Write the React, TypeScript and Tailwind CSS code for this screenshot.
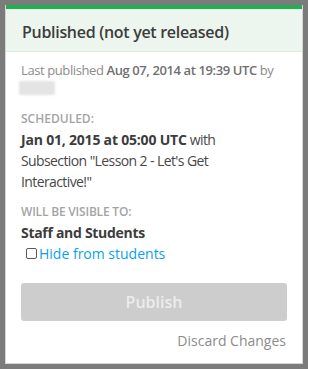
import React from "react";

export default function App() {
  return (
    <div className="w-[308px] h-[369px] bg-[#7b7b7b] p-[5px] pb-[5px]" style={{ fontFamily: '"Open Sans", sans-serif' }}>
      <div className="h-full bg-white border border-[#d6d6d6] border-t-0 flex flex-col">
        <div className="h-[4px] bg-[#1fb04f]" />
        <div className="h-[43px] bg-[#ecf6ee] border-b border-[#e2ece4] flex items-center px-[16px] pt-[3px]">
          <span className="text-[16px] font-semibold text-[#3c3c3c] tracking-[-0.3px]">Published (not yet released)</span>
        </div>
        <div className="px-[15px] pt-[9px] flex flex-col">
          <div className="text-[13px] leading-[19px] text-[#8c8c8c] tracking-[-0.4px]">
            Last published <span className="font-semibold text-[#707070]">Aug 07, 2014 at 19:39 UTC</span> by
          </div>
          <div className="w-[36px] h-[14px] bg-[#e4e4e4] rounded-[2px] blur-[1px] mt-[1px] -ml-[2px]" />
          <div className="mt-[15px] text-[12px] font-semibold uppercase text-[#a4a4a4] leading-[18px]">Scheduled:</div>
          <div className="text-[14px] leading-[21px] text-[#484848] mt-[1px] tracking-[-0.6px]">
            <span className="font-bold tracking-[-0.2px] text-[#3c3c3c]">Jan 01, 2015 at 05:00 UTC</span> with
            <br />
            Subsection "Lesson 2 - Let's Get
            <br />
            Interactive!"
          </div>
          <div className="mt-[11px] text-[12px] font-semibold uppercase text-[#a4a4a4] leading-[18px] tracking-[-0.2px]">Will be visible to:</div>
          <div className="text-[14px] leading-[21px] font-bold text-[#3c3c3c] mt-[1px] tracking-[-0.3px]">Staff and Students</div>
          <label className="flex items-center gap-[2px] ml-[5px] text-[14px] leading-[21px] text-[#0a9ff0]">
            <span className="w-[11px] h-[11px] border border-[#5a5a5a] rounded-[2px] bg-white inline-block" />
            Hide from students
          </label>
          <button className="mt-[19px] h-[38px] w-full rounded-[3px] bg-[#cdcdcd] text-[#ececec] text-[16px] font-semibold">
            Publish
          </button>
          <div className="mt-[9px] text-right text-[14px] text-[#8c8c8c] pr-[1px]">Discard Changes</div>
        </div>
      </div>
    </div>
  );
}
